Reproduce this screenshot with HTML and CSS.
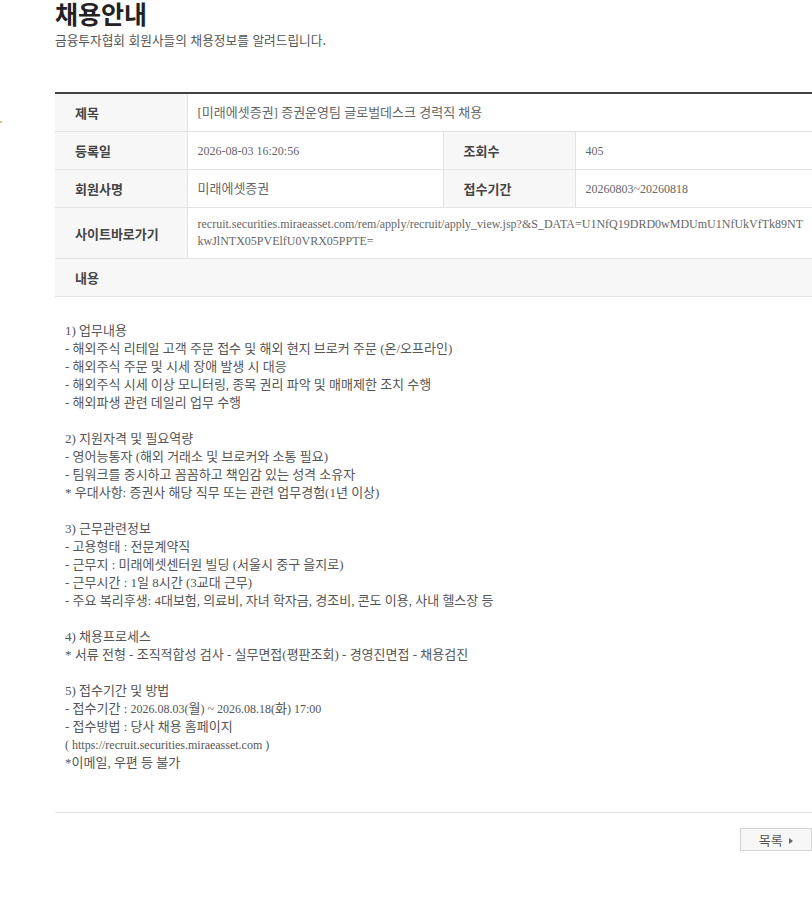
FILE: index.html
```html
<!DOCTYPE html>
<html lang="ko">
<head>
    <meta charset="UTF-8">
    <meta name="viewport" content="width=device-width, initial-scale=1.0">
    <title>채용안내</title>
    <link rel="stylesheet" href="styles.css">
</head>
<body>
    <span class="side-mark"></span>
    <div class="container">
        <div class="page-head">
            <h2>채용안내</h2>
            <p>금융투자협회 회원사들의 채용정보를 알려드립니다.</p>
        </div>
        <table class="view-table">
            <colgroup>
                <col class="c-label">
                <col class="c-value">
                <col class="c-label">
                <col>
            </colgroup>
            <tr>
                <th>제목</th>
                <td colspan="3" class="title-cell">[미래에셋증권] 증권운영팀 글로벌데스크 경력직 채용</td>
            </tr>
            <tr>
                <th>등록일</th>
                <td class="num">2026-08-03 16:20:56</td>
                <th>조회수</th>
                <td class="num">405</td>
            </tr>
            <tr>
                <th>회원사명</th>
                <td>미래에셋증권</td>
                <th>접수기간</th>
                <td class="num">20260803~20260818</td>
            </tr>
            <tr>
                <th class="url-head">사이트바로가기</th>
                <td colspan="3" class="url-cell num">recruit.securities.miraeasset.com/rem/apply/recruit/apply_view.jsp?&amp;S_DATA=U1NfQ19DRD0wMDUmU1NfUkVfTk89NTkwJlNTX05PVElfU0VRX05PPTE=</td>
            </tr>
            <tr>
                <th class="content-head">내용</th>
                <td colspan="3" class="content-head"></td>
            </tr>
        </table>
        <div class="content">1) 업무내용
- 해외주식 리테일 고객 주문 접수 및 해외 현지 브로커 주문 (온/오프라인)
- 해외주식 주문 및 시세 장애 발생 시 대응
- 해외주식 시세 이상 모니터링, 종목 권리 파악 및 매매제한 조치 수행
- 해외파생 관련 데일리 업무 수행

2) 지원자격 및 필요역량
- 영어능통자 (해외 거래소 및 브로커와 소통 필요)
- 팀워크를 중시하고 꼼꼼하고 책임감 있는 성격 소유자
* 우대사항: 증권사 해당 직무 또는 관련 업무경험(1년 이상)

3) 근무관련정보
- 고용형태 : 전문계약직
- 근무지 : 미래에셋센터원 빌딩 (서울시 중구 을지로)
- 근무시간 : 1일 8시간 (3교대 근무)
- 주요 복리후생: 4대보험, 의료비, 자녀 학자금, 경조비, 콘도 이용, 사내 헬스장 등

4) 채용프로세스
* 서류 전형 - 조직적합성 검사 - 실무면접(평판조회) - 경영진면접 - 채용검진

5) 접수기간 및 방법
- 접수기간 : <span class="num">2026.08.03(</span>월<span class="num">) ~ 2026.08.18(</span>화<span class="num">) 17:00</span>
- 접수방법 : 당사 채용 홈페이지
<span class="num">( https://recruit.securities.miraeasset.com )</span>
*이메일, 우편 등 불가</div>
        <div class="btn-area">
            <button type="button" class="btn-list">목록 <span class="arrow"></span></button>
        </div>
    </div>
</body>
</html>
```

FILE: styles.css
```css
body {
    margin: 0;
    padding: 0;
    background: #fff;
    font-family: "Liberation Serif", "Noto Sans CJK KR", serif;
    color: #666;
}
.side-mark {
    position: absolute;
    left: 0;
    top: 121px;
    width: 2px;
    height: 2px;
    background: #f6b48a;
}
.container {
    width: 757px;
    margin-left: 55px;
    padding-bottom: 40px;
}
.page-head {
    margin-bottom: 43px;
}
.page-head h2 {
    margin: 0;
    font-family: "Noto Sans CJK KR", sans-serif;
    font-size: 25px;
    line-height: 26px;
    font-weight: bold;
    color: #222;
}
.page-head p {
    margin: 5px 0 0;
    font-family: "Noto Sans CJK KR", sans-serif;
    font-size: 12.7px;
    line-height: 18px;
    color: #555;
}
.view-table {
    width: 100%;
    border-collapse: collapse;
    table-layout: fixed;
    border-top: 2px solid #444;
    font-size: 13px;
}
.c-label {
    width: 132px;
}
.c-value {
    width: 256px;
}
.view-table th {
    background: #f7f7f7;
    text-align: left;
    padding: 0 0 0 20px;
    height: 37px;
    font-family: "Noto Sans CJK KR", sans-serif;
    font-size: 13px;
    font-weight: bold;
    color: #444;
    border-bottom: 1px solid #e3e3e3;
    border-right: 1px solid #e3e3e3;
}
.view-table td {
    padding: 0 10px;
    height: 37px;
    line-height: 16px;
    color: #666;
    border-bottom: 1px solid #e3e3e3;
    border-right: 1px solid #e3e3e3;
}
.view-table td:last-child {
    border-right: none;
}
.num {
    font-size: 12px;
}
.title-cell {
    color: #76706c;
}
.view-table .url-head,
.view-table .url-cell {
    height: 50px;
}
.view-table .url-cell {
    padding: 0 4px 0 10px;
    line-height: 17px;
    word-break: break-all;
}
.view-table .content-head {
    background: #f7f7f7;
    border-right: none;
}
.content {
    white-space: pre-line;
    padding: 25px 10px 40px;
    font-size: 13px;
    line-height: 18px;
    color: #555;
    border-bottom: 1px solid #e3e3e3;
}
.btn-area {
    text-align: right;
    padding-top: 15px;
}
.btn-list {
    width: 72px;
    height: 23px;
    padding: 0;
    background: #f7f7f7;
    border: 1px solid #d3d3d3;
    font-family: "Noto Sans CJK KR", sans-serif;
    font-size: 13px;
    line-height: 21px;
    color: #555;
    cursor: pointer;
}
.arrow {
    display: inline-block;
    width: 0;
    height: 0;
    margin-left: 3px;
    border-left: 4px solid #666;
    border-top: 3px solid transparent;
    border-bottom: 3px solid transparent;
    vertical-align: 1px;
}
```
